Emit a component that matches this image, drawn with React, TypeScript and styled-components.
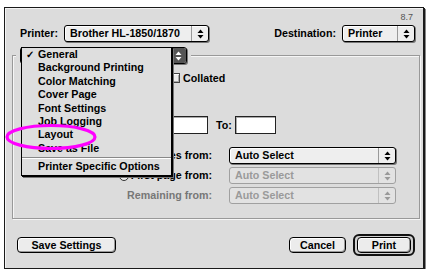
import styled, { createGlobalStyle } from "styled-components";

const GlobalStyle = createGlobalStyle`
    html, body {
        margin: 0;
        padding: 0;
        background: #ffffff;
    }
    body {
        font-family: "Liberation Sans", Arial, sans-serif;
        font-size: 10.7px;
        font-weight: 700;
        color: #000;
    }
`;

const menuItems = [
    "General",
    "Background Printing",
    "Color Matching",
    "Cover Page",
    "Font Settings",
    "Job Logging",
    "Layout",
    "Save as File",
];

function Arrows({ color }: { color: string }) {
    return (
        <svg width="7" height="10" viewBox="0 0 7 10">
            <path d="M3.5 0.5 L6.5 4 L0.5 4 Z" fill={color} />
            <path d="M0.5 6 L6.5 6 L3.5 9.5 Z" fill={color} />
        </svg>
    );
}

function Popup({ label, width, disabled, pressed }: { label?: string; width: number; disabled?: boolean; pressed?: boolean }) {
    return (
        <PopupBox $width={width} $disabled={!!disabled}>
            <PopupText $disabled={!!disabled}>{label}</PopupText>
            <PopupArrow $disabled={!!disabled} $pressed={!!pressed}>
                <Arrows color={pressed ? "#fff" : disabled ? "#999" : "#000"} />
            </PopupArrow>
        </PopupBox>
    );
}

export default function App() {
    return (
        <>
            <GlobalStyle />
            <Window>
                <VersionRow>8.7</VersionRow>

                <HeaderRow>
                    <Label>Printer:</Label>
                    <Popup label="Brother HL-1850/1870" width={145} />
                    <Spacer />
                    <Label>Destination:</Label>
                    <Popup label="Printer" width={73} />
                </HeaderRow>

                <Panel>
                    <PanelHeader>
                        <PopupHolder>
                            {/* the open menu covers the popup's title */}
                            <Popup width={167} pressed />
                        </PopupHolder>
                    </PanelHeader>
                    <PanelBody>
                        <CopiesRow>
                            <TextField $width={30} />
                            <Checkbox />
                            <Label>Collated</Label>
                        </CopiesRow>

                        <PagesRow>
                            <TextField $width={43} />
                            <Label>To:</Label>
                            <TextField $width={41} />
                        </PagesRow>

                        <SourceRows>
                            <SourceRow>
                                <SourceLabel>
                                    <Label>All pages from:</Label>
                                </SourceLabel>
                                <Popup label="Auto Select" width={167} />
                            </SourceRow>
                            <SourceRow>
                                <SourceLabel>
                                    <Radio />
                                    <Label>First page from:</Label>
                                </SourceLabel>
                                <Popup label="Auto Select" width={167} disabled />
                            </SourceRow>
                            <SourceRow>
                                <SourceLabel>
                                    <Label $muted>Remaining from:</Label>
                                </SourceLabel>
                                <Popup label="Auto Select" width={167} disabled />
                            </SourceRow>
                        </SourceRows>
                    </PanelBody>
                </Panel>

                <Footer>
                    <Button $width={99}>Save Settings</Button>
                    <Spacer />
                    <Button $width={57}>Cancel</Button>
                    <DefaultRing>
                        <Button $width={54}>Print</Button>
                    </DefaultRing>
                </Footer>

                <Menu>
                    {menuItems.map((item, i) => (
                        <MenuItem key={item}>
                            <Check>{i === 0 ? "✓" : ""}</Check>
                            {item}
                        </MenuItem>
                    ))}
                    <MenuSeparator />
                    <MenuItem>
                        <Check />
                        Printer Specific Options
                    </MenuItem>
                </Menu>

                <Marker width="96" height="30" viewBox="0 0 96 30">
                    <ellipse cx="46" cy="14" rx="44" ry="11.5" fill="none" stroke="#ff00ff" strokeWidth="3.2" />
                </Marker>
            </Window>
        </>
    );
}

const Window = styled.div`
    position: relative;
    box-sizing: border-box;
    margin: 7px 0 0 4px;
    width: 420px;
    height: 262px;
    background: #dcdcdc;
    border: 1px solid #1a1a1a;
    box-shadow: 1px 1px 0 #1a1a1a, 2px 2px 0 #888, inset 1px 1px 0 #f4f4f4;
    display: flex;
    flex-direction: column;
`;

const VersionRow = styled.div`
    height: 17px;
    box-sizing: border-box;
    padding: 4px 10px 0 0;
    text-align: right;
    font-size: 9px;
    font-weight: 400;
    line-height: 11px;
    color: #555;
`;

const HeaderRow = styled.div`
    display: flex;
    align-items: center;
    gap: 6px;
    height: 17px;
    padding: 0 8px 0 15px;
    margin-bottom: 5px;
`;

const Spacer = styled.div`
    flex: 1;
`;

const Label = styled.span<{ $muted?: boolean }>`
    white-space: nowrap;
    line-height: 13px;
    color: ${({ $muted }) => ($muted ? "#777" : "#000")};
`;

const PopupBox = styled.div<{ $width: number; $disabled: boolean }>`
    box-sizing: border-box;
    display: flex;
    align-items: stretch;
    width: ${({ $width }) => $width}px;
    height: 17px;
    border: 1px solid ${({ $disabled }) => ($disabled ? "#a0a0a0" : "#000")};
    border-radius: 3px;
    background: ${({ $disabled }) => ($disabled ? "#e2e2e2" : "#eeeeee")};
    box-shadow: ${({ $disabled }) =>
        $disabled ? "none" : "1px 1px 0 #777, inset 1px 1px 0 #fff"};
    overflow: hidden;
`;

const PopupText = styled.span<{ $disabled: boolean }>`
    flex: 1;
    padding-left: 5px;
    line-height: 15px;
    white-space: nowrap;
    overflow: hidden;
    color: ${({ $disabled }) => ($disabled ? "#9a9a9a" : "#000")};
`;

const PopupArrow = styled.span<{ $disabled: boolean; $pressed: boolean }>`
    width: 16px;
    display: flex;
    align-items: center;
    justify-content: center;
    border-left: 1px solid ${({ $disabled }) => ($disabled ? "#c0c0c0" : "#999")};
    background: ${({ $pressed }) => ($pressed ? "#555" : "transparent")};
`;

const Panel = styled.div`
    margin: 0 3px 0 7px;
    display: flex;
    flex-direction: column;
`;

const PanelHeader = styled.div`
    position: relative;
    z-index: 1;
    display: flex;
    padding-left: 4px;
`;

const PopupHolder = styled.div`
    background: #dcdcdc;
    padding: 0 4px;
`;

const PanelBody = styled.div`
    margin-top: -9px;
    height: 164px;
    box-sizing: border-box;
    border: 1px solid #999;
    box-shadow: inset 1px 1px 0 #f6f6f6, 1px 1px 0 #f6f6f6;
    padding: 14px 0 14px 7px;
    display: flex;
    flex-direction: column;
`;

const CopiesRow = styled.div`
    display: flex;
    align-items: center;
    gap: 3px;
    height: 16px;
    padding-left: 80px;
`;

const TextField = styled.div<{ $width: number }>`
    box-sizing: border-box;
    width: ${({ $width }) => $width}px;
    height: 18px;
    background: #fff;
    border: 1px solid #222;
    box-shadow: inset 1px 1px 0 #aaa;
`;

const Checkbox = styled.span`
    box-sizing: border-box;
    width: 8px;
    height: 10px;
    margin-left: 39px;
    border: 1px solid #444;
    background: #eee;
    box-shadow: inset 1px 1px 0 #fff, inset -1px -1px 0 #aaa;
`;

const Radio = styled.span`
    box-sizing: border-box;
    width: 10px;
    height: 10px;
    border-radius: 50%;
    border: 1px solid #333;
    background: #eee;
    margin-right: 2px;
    flex-shrink: 0;
`;

const PagesRow = styled.div`
    display: flex;
    align-items: center;
    gap: 8px;
    height: 18px;
    margin-top: 30px;
    padding-left: 145px;

    & > span {
        margin-right: -5px;
    }
`;

const SourceRows = styled.div`
    display: flex;
    flex-direction: column;
    gap: 3px;
    margin-top: 13px;
`;

const SourceRow = styled.div`
    display: flex;
    align-items: center;
    gap: 17px;
    height: 17px;
`;

const SourceLabel = styled.div`
    width: 192px;
    display: flex;
    align-items: center;
    justify-content: flex-end;
`;

const Footer = styled.div`
    display: flex;
    align-items: center;
    gap: 7px;
    height: 22px;
    margin-top: 15px;
    padding: 0 8px 0 12px;
`;

const Button = styled.div<{ $width: number }>`
    box-sizing: border-box;
    width: ${({ $width }) => $width}px;
    height: 16px;
    border: 1px solid #000;
    border-radius: 4px;
    background: #ececec;
    box-shadow: inset 1px 1px 0 #fff, inset -1px -1px 0 #999;
    display: flex;
    align-items: center;
    justify-content: center;
    line-height: 14px;
`;

const DefaultRing = styled.div`
    box-sizing: border-box;
    width: 62px;
    height: 22px;
    border: 2px solid #111;
    border-radius: 6px;
    padding: 1px 2px;
    background: #d0d0d0;
    display: flex;
    align-items: center;
`;

const Menu = styled.div`
    position: absolute;
    z-index: 2;
    left: 16px;
    top: 39px;
    width: 151px;
    box-sizing: border-box;
    background: #dedede;
    border: 1px solid #000;
    box-shadow: 1px 1px 0 #000, 2px 2px 0 #777;
    padding: 0 0 1px;
`;

const MenuItem = styled.div`
    display: flex;
    height: 13.4px;
    line-height: 13.4px;
    white-space: nowrap;
`;

const Check = styled.span`
    width: 16px;
    text-align: center;
    font-size: 10px;
`;

const MenuSeparator = styled.div`
    height: 1px;
    margin: 2px 0 2px;
    background: #888;
    box-shadow: 0 1px 0 #fff;
`;

const Marker = styled.svg`
    position: absolute;
    z-index: 3;
    left: 0;
    top: 115px;
`;
